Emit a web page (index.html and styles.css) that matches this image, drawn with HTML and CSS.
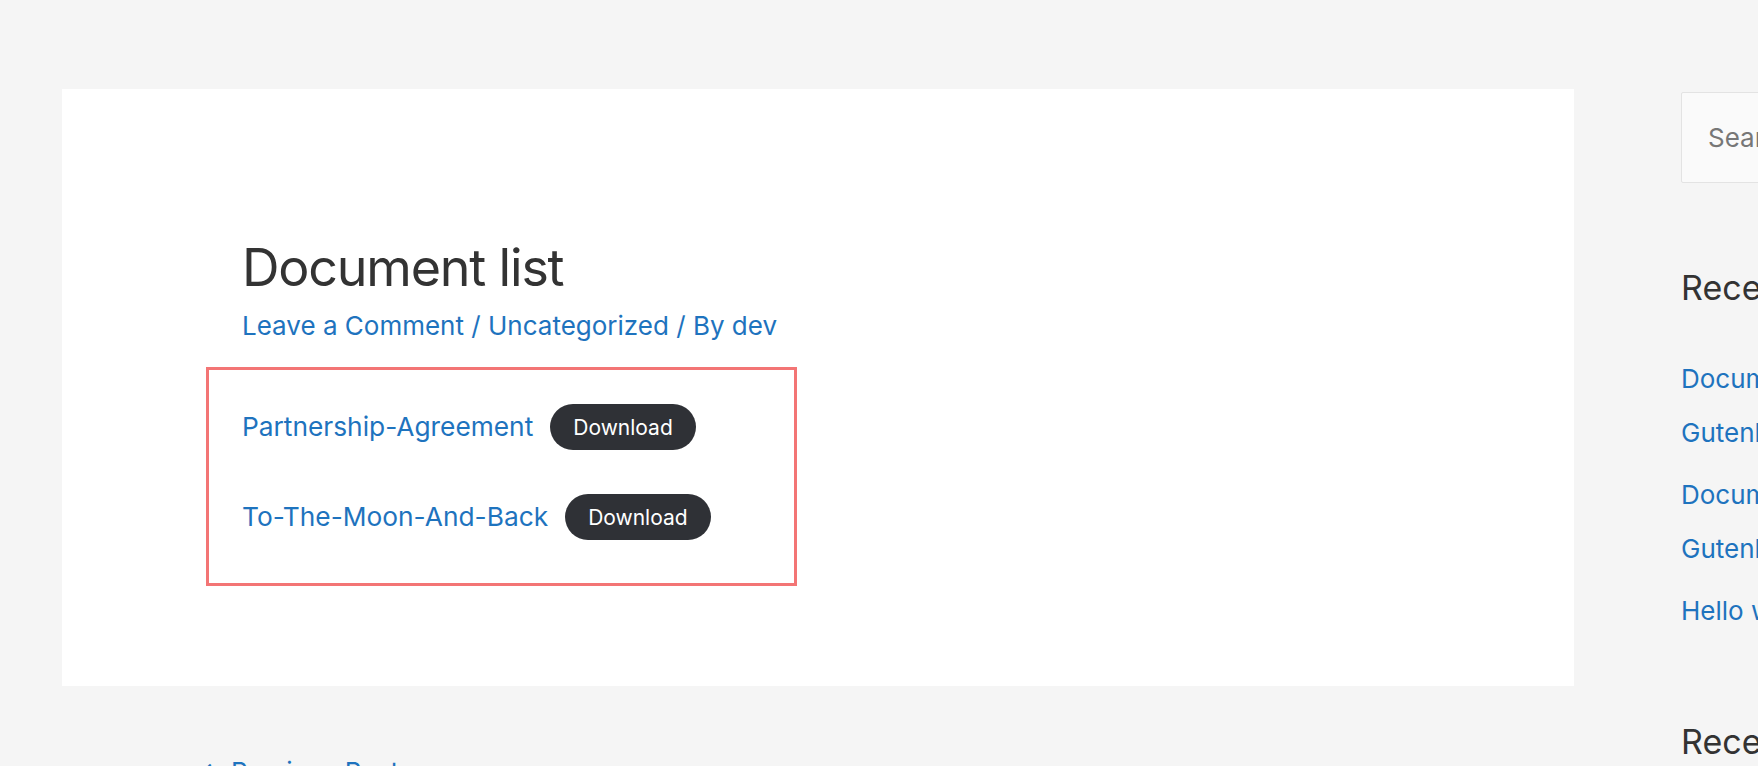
FILE: index.html
```html
<!DOCTYPE html>
<html lang="en">
<head>
<meta charset="utf-8">
<title>Document list</title>
<link rel="stylesheet" href="styles.css">
</head>
<body>
<div class="site">
  <main class="primary">
    <article class="card">
      <h1 class="entry-title">Document list</h1>
      <div class="entry-meta">
        <a href="#">Leave a Comment</a> / <a href="#">Uncategorized</a> / By <a href="#">dev</a>
      </div>
      <div class="doc-list">
        <div class="doc-row">
          <a class="doc-link" href="#">Partnership-Agreement</a>
          <a class="doc-btn" href="#">Download</a>
        </div>
        <div class="doc-row">
          <a class="doc-link" href="#">To-The-Moon-And-Back</a>
          <a class="doc-btn" href="#">Download</a>
        </div>
      </div>
    </article>
    <nav class="post-nav">
      <a href="#">← Previous Post</a>
    </nav>
  </main>
  <aside class="sidebar">
    <div class="search-box">Search …</div>
    <section class="widget">
      <h2 class="widget-title">Recent Posts</h2>
      <ul class="widget-list">
        <li><a href="#">Document Library in Gutenberg</a></li>
        <li><a href="#">Document Embed in Gutenberg</a></li>
        <li><a href="#">Hello world!</a></li>
      </ul>
    </section>
    <section class="widget">
      <h2 class="widget-title">Recent Comments</h2>
    </section>
  </aside>
</div>
</body>
</html>
```

FILE: styles.css
```css
html, body {
  margin: 0;
  padding: 0;
}

body {
  background: #f5f5f5;
  font-family: Inter, "Liberation Sans", sans-serif;
  color: #333333;
  overflow: hidden;
  height: 766px;
}

a {
  color: #1e73be;
  text-decoration: none;
}

.site {
  display: flex;
  align-items: flex-start;
  gap: 107px;
  padding: 89px 0 0 62px;
  width: 2000px;
}

.primary {
  width: 1512px;
  flex-shrink: 0;
}

.card {
  background: #ffffff;
  padding: 146px 180px 100px 180px;
}

.entry-title {
  margin: 0;
  font-size: 52px;
  font-weight: 400;
  letter-spacing: -1.2px;
  line-height: 65px;
  color: #333333;
}

.entry-meta {
  margin-top: 6px;
  font-size: 26px;
  line-height: 39px;
  color: #1e73be;
}

.doc-list {
  margin: 22px 0 0 -36px;
  width: 591px;
  box-sizing: border-box;
  border: 3px solid #f37575;
  padding: 34px 33px 43px;
  display: flex;
  flex-direction: column;
  gap: 44px;
}

.doc-row {
  display: flex;
  align-items: center;
  gap: 17px;
}

.doc-link {
  font-size: 26.3px;
  line-height: 46px;
}

.doc-btn {
  display: inline-flex;
  align-items: center;
  height: 46px;
  padding: 0 23px;
  border-radius: 23px;
  background: #2f3136;
  color: #ffffff;
  font-size: 21px;
}

.post-nav {
  margin-top: 66px;
  padding-left: 137px;
  font-size: 26px;
  line-height: 39px;
}

.sidebar {
  width: 300px;
  flex-shrink: 0;
  padding-top: 3px;
}

.search-box {
  height: 89px;
  border: 1px solid #e3e3e3;
  border-radius: 2px;
  background: #fafafa;
  padding-left: 26px;
  font-size: 26px;
  line-height: 89px;
  color: #777777;
}

.widget-title {
  margin: 84px 0 0;
  font-size: 34px;
  font-weight: 400;
  line-height: 41px;
  color: #333333;
}

.widget + .widget .widget-title {
  margin-top: 83px;
}

.widget-list {
  list-style: none;
  margin: 44px 0 0;
  padding: 0;
  font-size: 26px;
  line-height: 54px;
}

.widget-list li {
  margin-bottom: 8px;
}
```
